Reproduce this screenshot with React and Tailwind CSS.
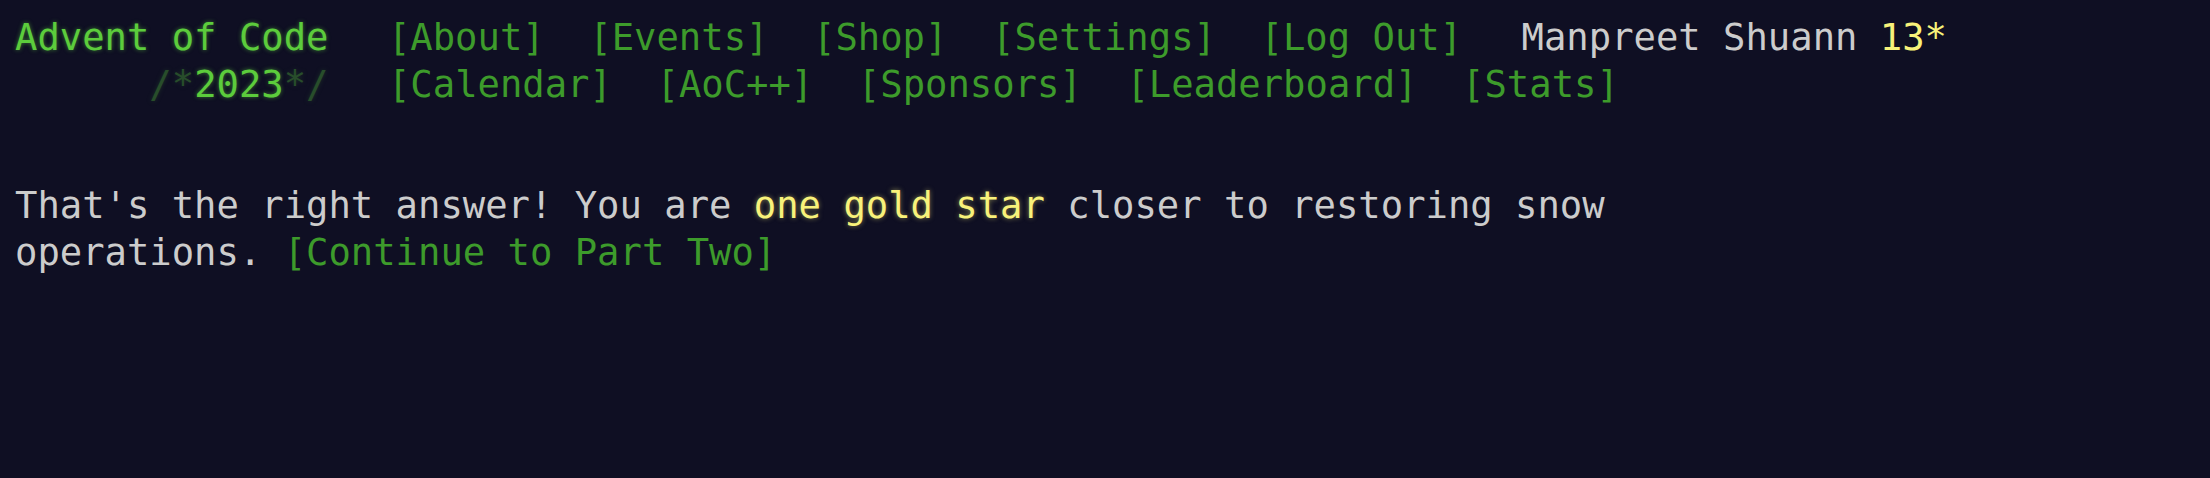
const navTop = ["About", "Events", "Shop", "Settings", "Log Out"];
const navBottom = ["Calendar", "AoC++", "Sponsors", "Leaderboard", "Stats"];

function Nav({ items }) {
    return (
        <ul className="flex">
            {items.map((item) => (
                <li key={item} className="px-[0.6em]">
                    <a href="#" className="text-[#3d9b2b] whitespace-pre">
                        [{item}]
                    </a>
                </li>
            ))}
        </ul>
    );
}

export default function App() {
    return (
        <div
            className="min-h-screen w-full bg-[#0f0f23] text-[#cccccc] text-[37.2px] leading-[46.9px] pl-[15px] pt-[14px]"
            style={{ fontFamily: '"DejaVu Sans Mono", "Liberation Mono", monospace' }}
        >
            <header className="whitespace-nowrap mb-[2em]">
                <div className="flex">
                    <h1 className="pr-[1em] font-normal text-[#5ccc3c] [text-shadow:0_0_4px_rgba(92,204,60,0.55)]">
                        <a href="#">Advent of Code</a>
                    </h1>
                    <Nav items={navTop} />
                    <div className="pl-[1em]">
                        Manpreet Shuann <span className="text-[#f8f27a]">13*</span>
                    </div>
                </div>
                <div className="flex">
                    <h1 className="pr-[1em] font-normal text-[#5ccc3c] whitespace-pre [text-shadow:0_0_4px_rgba(92,204,60,0.55)]">
                        {"      "}
                        <span className="opacity-[0.33]">/*</span>
                        <a href="#">2023</a>
                        <span className="opacity-[0.33]">*/</span>
                    </h1>
                    <Nav items={navBottom} />
                </div>
            </header>
            <main>
                <article className="w-[45em]">
                    <p>
                        That's the right answer! You are{" "}
                        <span className="text-[#f8f27a] [text-shadow:0_0_5px_rgba(248,242,122,0.5)]">one gold star</span>{" "}
                        closer to restoring snow operations.{" "}
                        <a href="#" className="text-[#3d9b2b]">
                            [Continue to Part Two]
                        </a>
                    </p>
                </article>
            </main>
        </div>
    );
}
